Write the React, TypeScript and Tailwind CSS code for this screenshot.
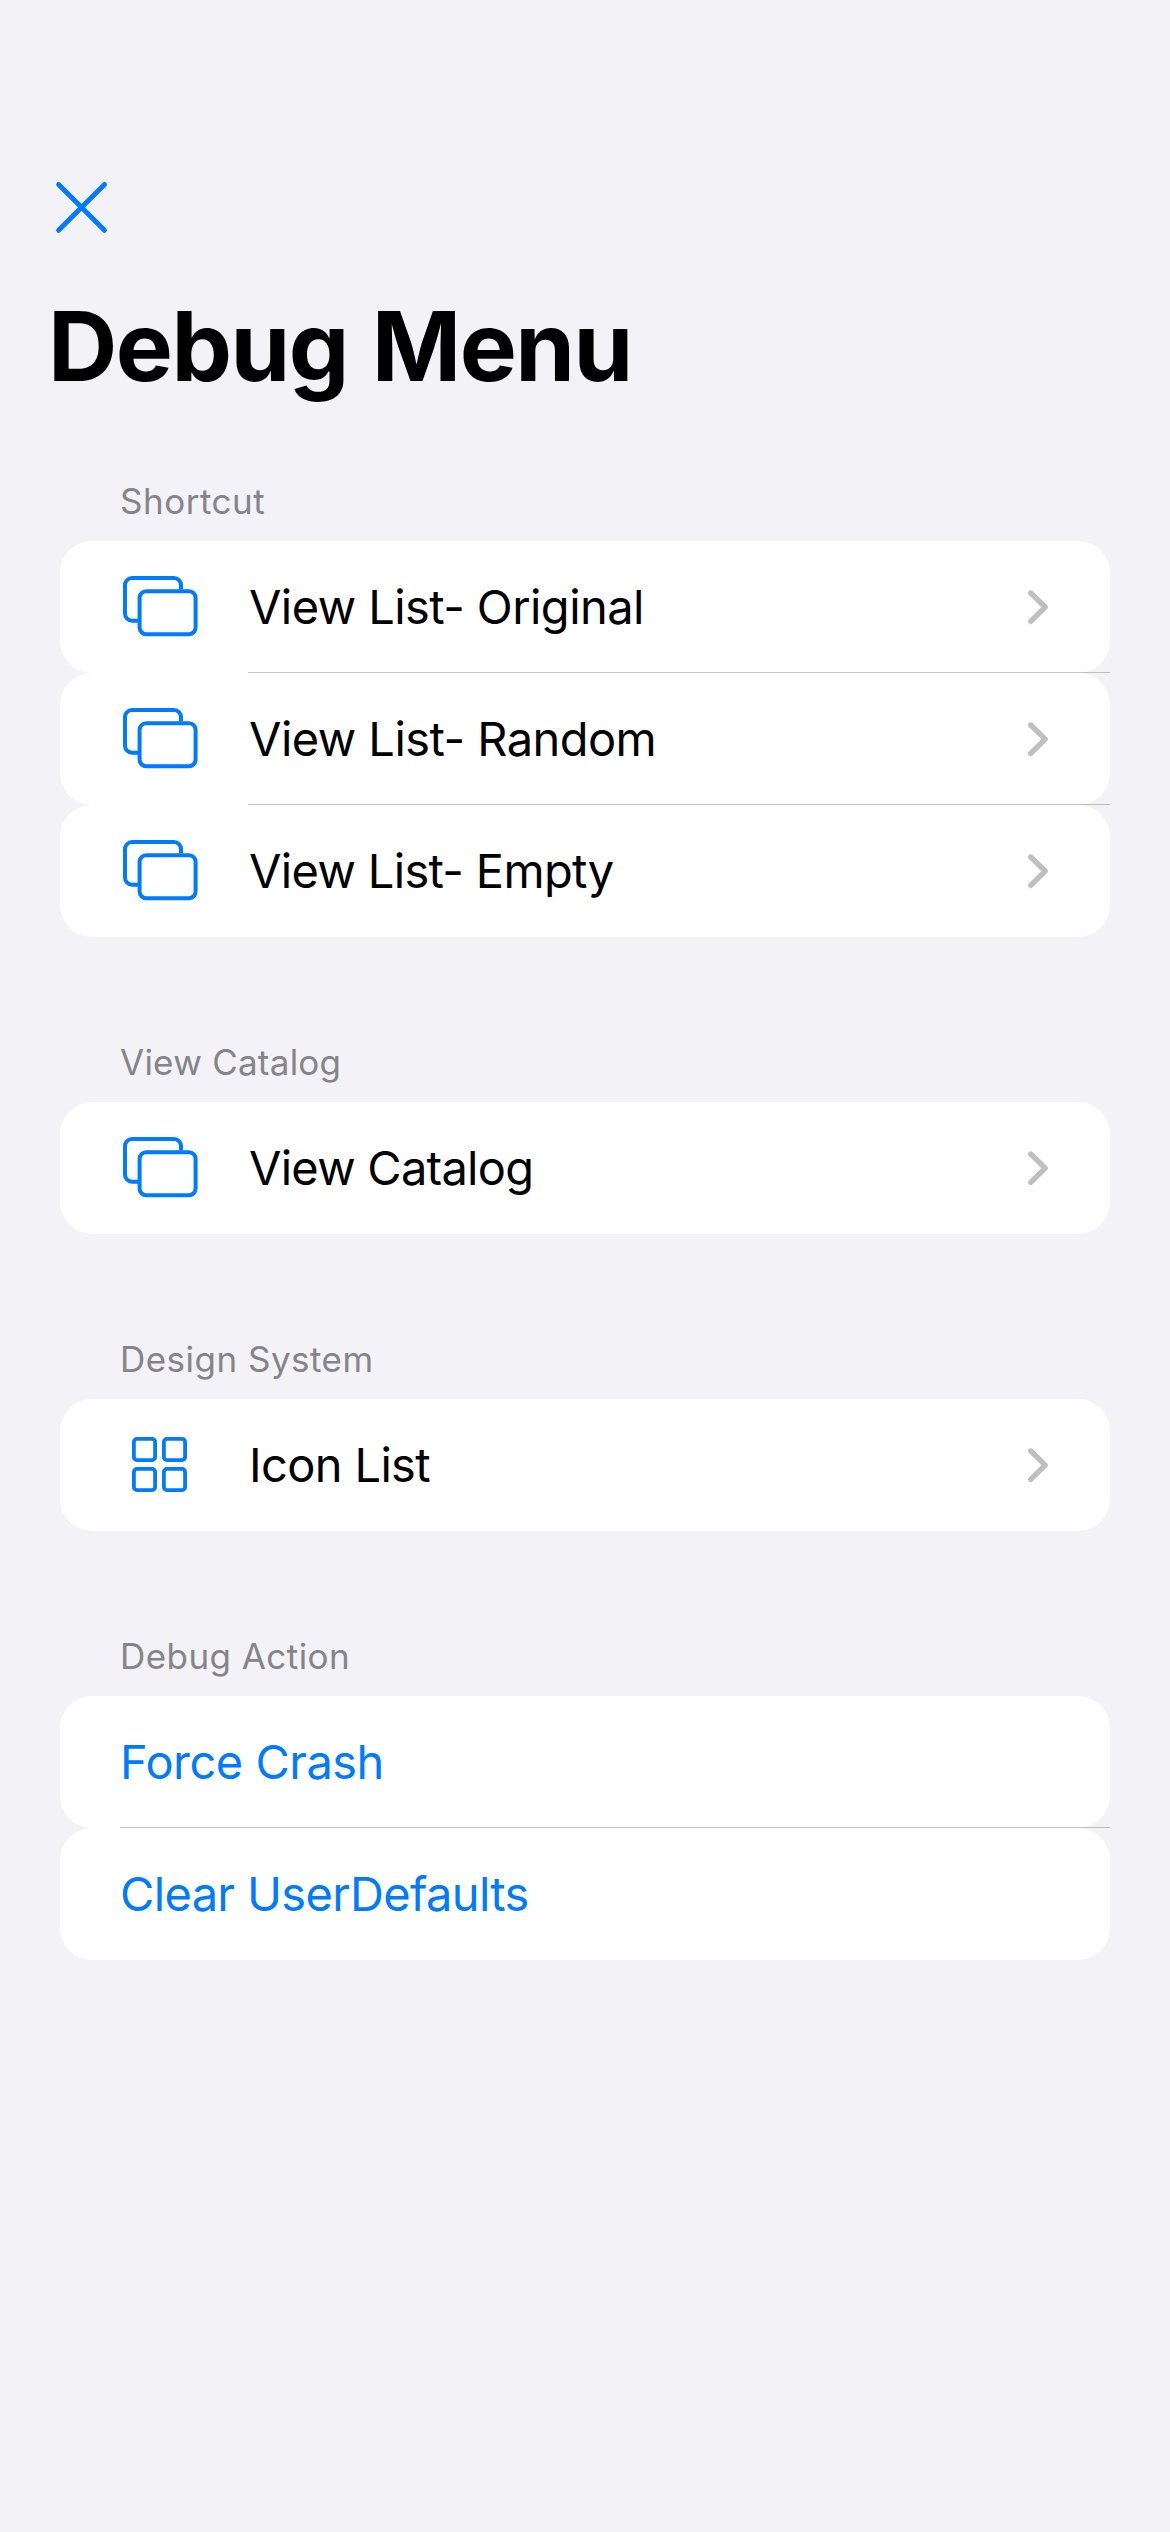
import type { ReactNode } from "react";

function CloseIcon() {
  return (
    <svg width="56" height="56" viewBox="0 0 56 56" fill="none" stroke="#007aff" strokeWidth="4.9" strokeLinecap="round">
      <path d="M4.6 5.4 50.5 51.3M50.5 5.4 4.6 51.3" />
    </svg>
  );
}

function WindowsIcon() {
  return (
    <svg className="shrink-0" width="80" height="72" viewBox="0 0 80 72" fill="none" stroke="#007aff" strokeWidth="4">
      <path d="M61 18.5V14a7 7 0 0 0-7-7H12a7 7 0 0 0-7 7v28.7a7 7 0 0 0 7 7h6" />
      <rect x="19.6" y="20.2" width="56" height="43" rx="6.6" />
    </svg>
  );
}

function GridIcon() {
  return (
    <svg className="shrink-0" width="80" height="72" viewBox="0 0 80 72" fill="none" stroke="#007aff" strokeWidth="3.8">
      <rect x="13.9" y="9.9" width="21.2" height="21.2" rx="3" />
      <rect x="43.9" y="9.9" width="21.2" height="21.2" rx="3" />
      <rect x="13.9" y="39.9" width="21.2" height="21.2" rx="3" />
      <rect x="43.9" y="39.9" width="21.2" height="21.2" rx="3" />
    </svg>
  );
}

function Chevron() {
  return (
    <svg className="shrink-0" width="24" height="40" viewBox="0 0 24 40" fill="none" stroke="#bfbfbf" strokeWidth="5.4" strokeLinecap="round" strokeLinejoin="round">
      <path d="M4.8 6 19.2 20.2 4.8 34.4" />
    </svg>
  );
}

function Section({ title, tracking, children }: { title: string; tracking: string; children: ReactNode }) {
  return (
    <section className="mb-[105px]">
      <h2 className={`mb-5 pl-[60px] text-[35px] leading-[40px] text-[#858589] ${tracking}`}>{title}</h2>
      <ul>{children}</ul>
    </section>
  );
}

function LinkRow({ icon, label, tracking, divider }: { icon: ReactNode; label: string; tracking: string; divider?: boolean }) {
  return (
    <li className="relative flex h-[132px] items-center rounded-[32px] bg-white pr-[60px] pl-[60px]">
      {icon}
      <span className={`ml-[49px] grow text-[47px] leading-[56px] text-black ${tracking}`}>{label}</span>
      <Chevron />
      {divider && <span className="absolute right-0 bottom-0 left-[188px] h-px bg-[#3c3c43]/29" />}
    </li>
  );
}

function ActionRow({ label, tracking, divider }: { label: string; tracking: string; divider?: boolean }) {
  return (
    <li className="relative flex h-[132px] items-center rounded-[32px] bg-white px-[60px]">
      <button className={`text-[47px] leading-[56px] text-[#007aff] ${tracking}`}>{label}</button>
      {divider && <span className="absolute right-0 bottom-0 left-[60px] h-px bg-[#3c3c43]/29" />}
    </li>
  );
}

export default function App() {
  return (
    <div className="min-h-[2532px] w-[1170px] bg-[#f2f2f7] pt-[179px] font-['Inter',sans-serif]">
      <header className="flex h-[302px] flex-col items-start">
        <button className="ml-[54px]" aria-label="Close">
          <CloseIcon />
        </button>
        <h1 className="mt-[53px] ml-12 text-[96px] leading-[116px] font-bold tracking-[-1.5px] text-black [word-spacing:2.5px]">Debug Menu</h1>
      </header>
      <main className="px-[60px]">
        <Section title="Shortcut" tracking="tracking-[0.52px]">
          <LinkRow icon={<WindowsIcon />} label="View List- Original" tracking="tracking-[-0.57px]" divider />
          <LinkRow icon={<WindowsIcon />} label="View List- Random" tracking="tracking-[-0.54px]" divider />
          <LinkRow icon={<WindowsIcon />} label="View List- Empty" tracking="tracking-[-0.66px]" />
        </Section>
        <Section title="View Catalog" tracking="tracking-[0.25px]">
          <LinkRow icon={<WindowsIcon />} label="View Catalog" tracking="tracking-[-0.74px]" />
        </Section>
        <Section title="Design System" tracking="tracking-[0.48px]">
          <LinkRow icon={<GridIcon />} label="Icon List" tracking="tracking-[-0.64px]" />
        </Section>
        <Section title="Debug Action" tracking="tracking-[0.44px]">
          <ActionRow label="Force Crash" tracking="tracking-[-0.51px]" divider />
          <ActionRow label="Clear UserDefaults" tracking="tracking-[-0.65px]" />
        </Section>
      </main>
    </div>
  );
}
